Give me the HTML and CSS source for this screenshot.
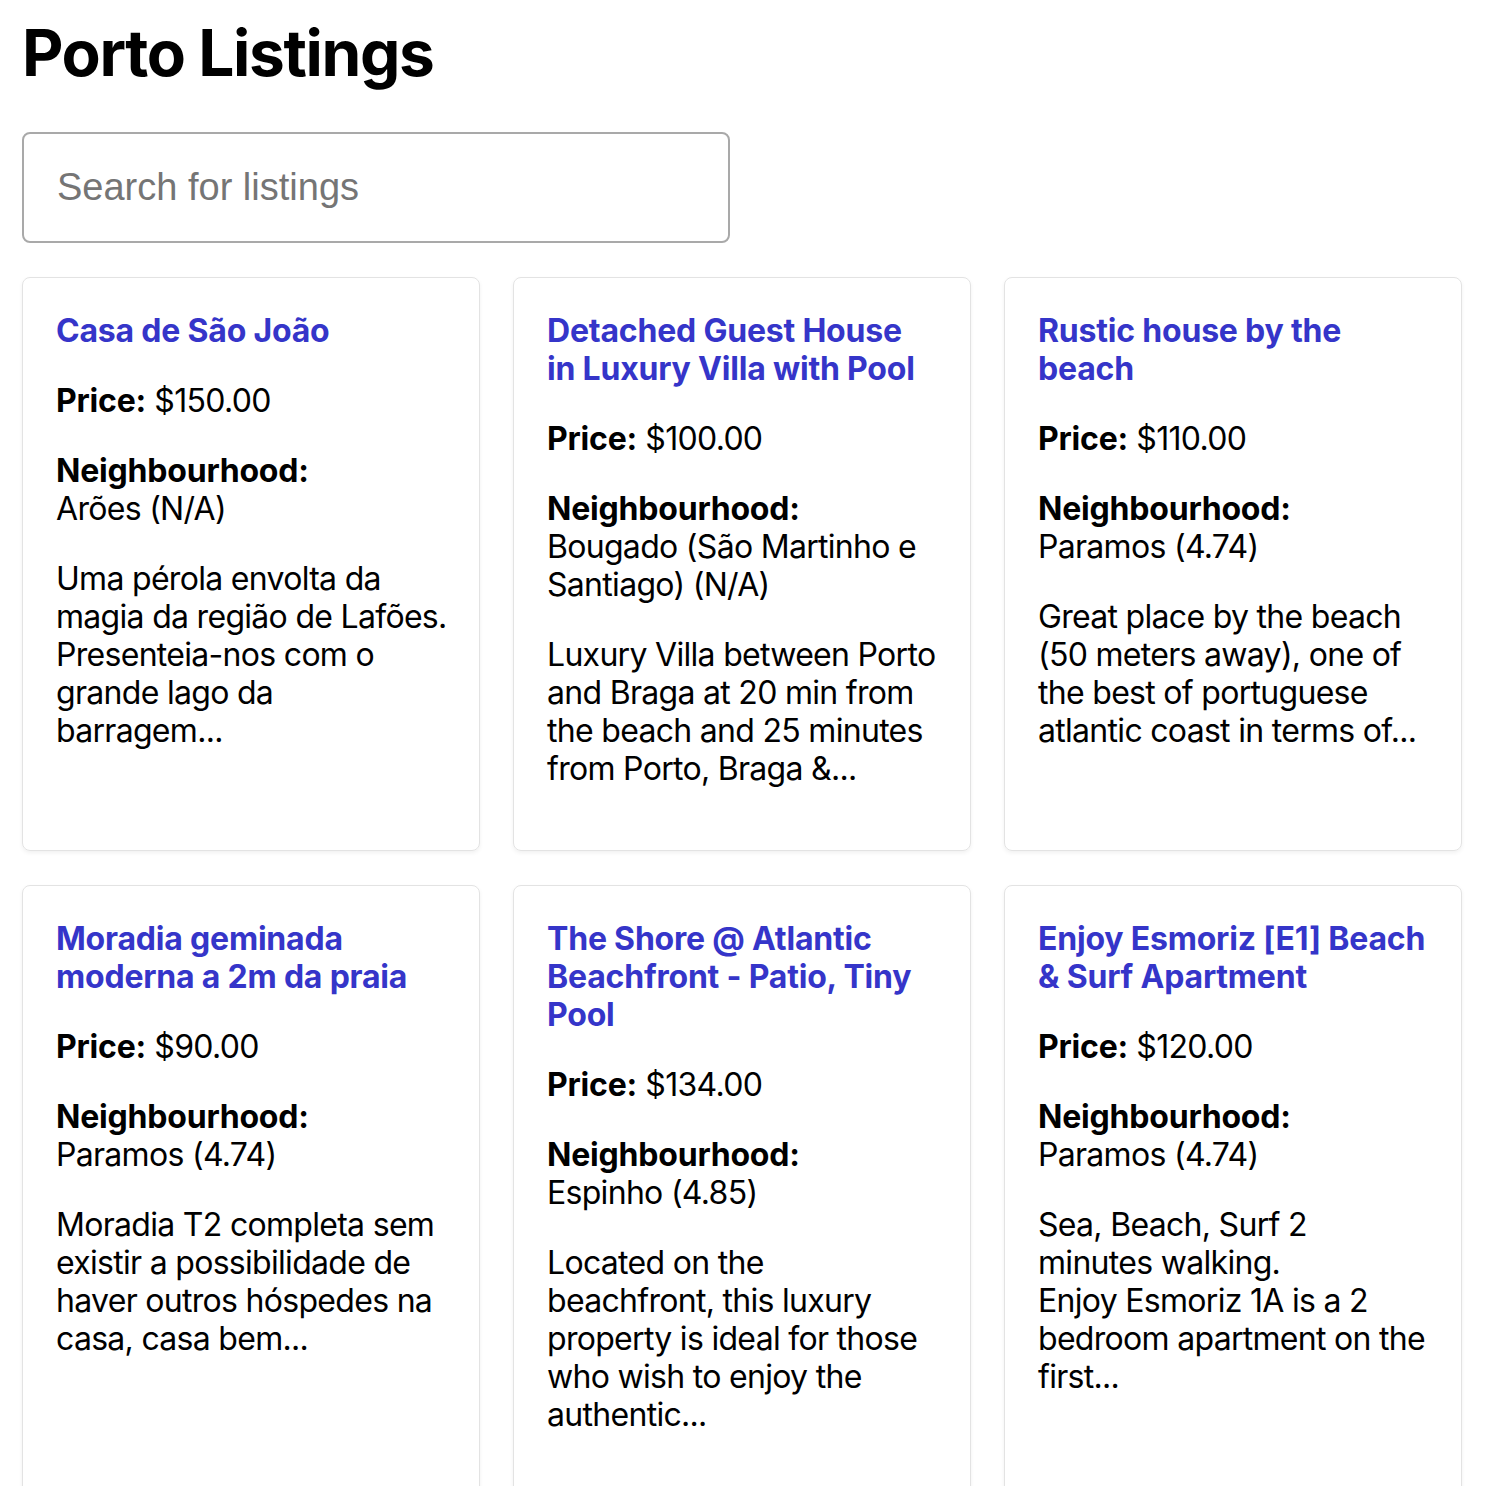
FILE: index.html
```html
<!DOCTYPE html>
<html lang="en">
<head>
<meta charset="utf-8">
<title>Porto Listings</title>
<link rel="stylesheet" href="styles.css">
</head>
<body>
<main class="page">
  <h1 class="page-title">Porto Listings</h1>
  <input class="search" type="text" placeholder="Search for listings">
  <section class="grid">
    <article class="card">
      <h3 class="card-title">Casa de São João</h3>
      <p><strong>Price:</strong> $150.00</p>
      <p><strong>Neighbourhood:</strong><br>Arões (N/A)</p>
      <p>Uma pérola envolta da<br>magia da região de Lafões.<br>Presenteia-nos com o<br>grande lago da<br>barragem...</p>
    </article>
    <article class="card">
      <h3 class="card-title">Detached Guest House<br>in Luxury Villa with Pool</h3>
      <p><strong>Price:</strong> $100.00</p>
      <p><strong>Neighbourhood:</strong><br>Bougado (São Martinho e<br>Santiago) (N/A)</p>
      <p>Luxury Villa between Porto<br>and Braga at 20 min from<br>the beach and 25 minutes<br>from Porto, Braga &amp;...</p>
    </article>
    <article class="card">
      <h3 class="card-title">Rustic house by the<br>beach</h3>
      <p><strong>Price:</strong> $110.00</p>
      <p><strong>Neighbourhood:</strong><br>Paramos (4.74)</p>
      <p>Great place by the beach<br>(50 meters away), one of<br>the best of portuguese<br>atlantic coast in terms of...</p>
    </article>
    <article class="card">
      <h3 class="card-title">Moradia geminada<br>moderna a 2m da praia</h3>
      <p><strong>Price:</strong> $90.00</p>
      <p><strong>Neighbourhood:</strong><br>Paramos (4.74)</p>
      <p>Moradia T2 completa sem<br>existir a possibilidade de<br>haver outros hóspedes na<br>casa, casa bem...</p>
    </article>
    <article class="card">
      <h3 class="card-title">The Shore @ Atlantic<br>Beachfront - Patio, Tiny<br>Pool</h3>
      <p><strong>Price:</strong> $134.00</p>
      <p><strong>Neighbourhood:</strong><br>Espinho (4.85)</p>
      <p>Located on the<br>beachfront, this luxury<br>property is ideal for those<br>who wish to enjoy the<br>authentic...</p>
    </article>
    <article class="card">
      <h3 class="card-title">Enjoy Esmoriz [E1] Beach<br>&amp; Surf Apartment</h3>
      <p><strong>Price:</strong> $120.00</p>
      <p><strong>Neighbourhood:</strong><br>Paramos (4.74)</p>
      <p>Sea, Beach, Surf 2<br>minutes walking.<br>Enjoy Esmoriz 1A is a 2<br>bedroom apartment on the<br>first...</p>
    </article>
  </section>
</main>
</body>
</html>
```

FILE: styles.css
```css
html, body {
  margin: 0;
  padding: 0;
  background: #ffffff;
}

body {
  font-family: Inter, "Noto Sans", "Liberation Sans", sans-serif;
  color: #000000;
  font-size: 32px;
  line-height: 38px;
}

.page {
  padding: 14px 22px 0;
  width: 1440px;
}

.page-title {
  margin: 0 0 41px;
  font-size: 64px;
  line-height: 77px;
  font-weight: 700;
  letter-spacing: -1.4px;
}

.search {
  display: block;
  box-sizing: border-box;
  width: 708px;
  height: 111px;
  margin: 0 0 34px;
  padding: 0 33px;
  border: 2px solid #a9a9a9;
  border-radius: 8px;
  font-family: "Liberation Sans", Arial, sans-serif;
  font-size: 38px;
  color: #000;
  outline: none;
}

.search::placeholder {
  color: #757575;
}

.grid {
  display: grid;
  grid-template-columns: repeat(3, minmax(0, 1fr));
  column-gap: 33px;
  row-gap: 34px;
}

.card {
  padding: 34px 32px 30px 33px;
  border: 1.5px solid #e3e3e3;
  border-radius: 8px;
  box-shadow: 0 2px 4px rgba(0, 0, 0, 0.06);
  white-space: nowrap;
  min-width: 0;
}

.card-title {
  margin: 0 0 32px;
  font-size: 32px;
  line-height: 38px;
  font-weight: 700;
  color: #3535c9;
  letter-spacing: -0.2px;
}

.card p {
  margin: 0 0 32px;
  letter-spacing: -0.7px;
}

.card strong {
  font-weight: 700;
  letter-spacing: -0.2px;
}
```
